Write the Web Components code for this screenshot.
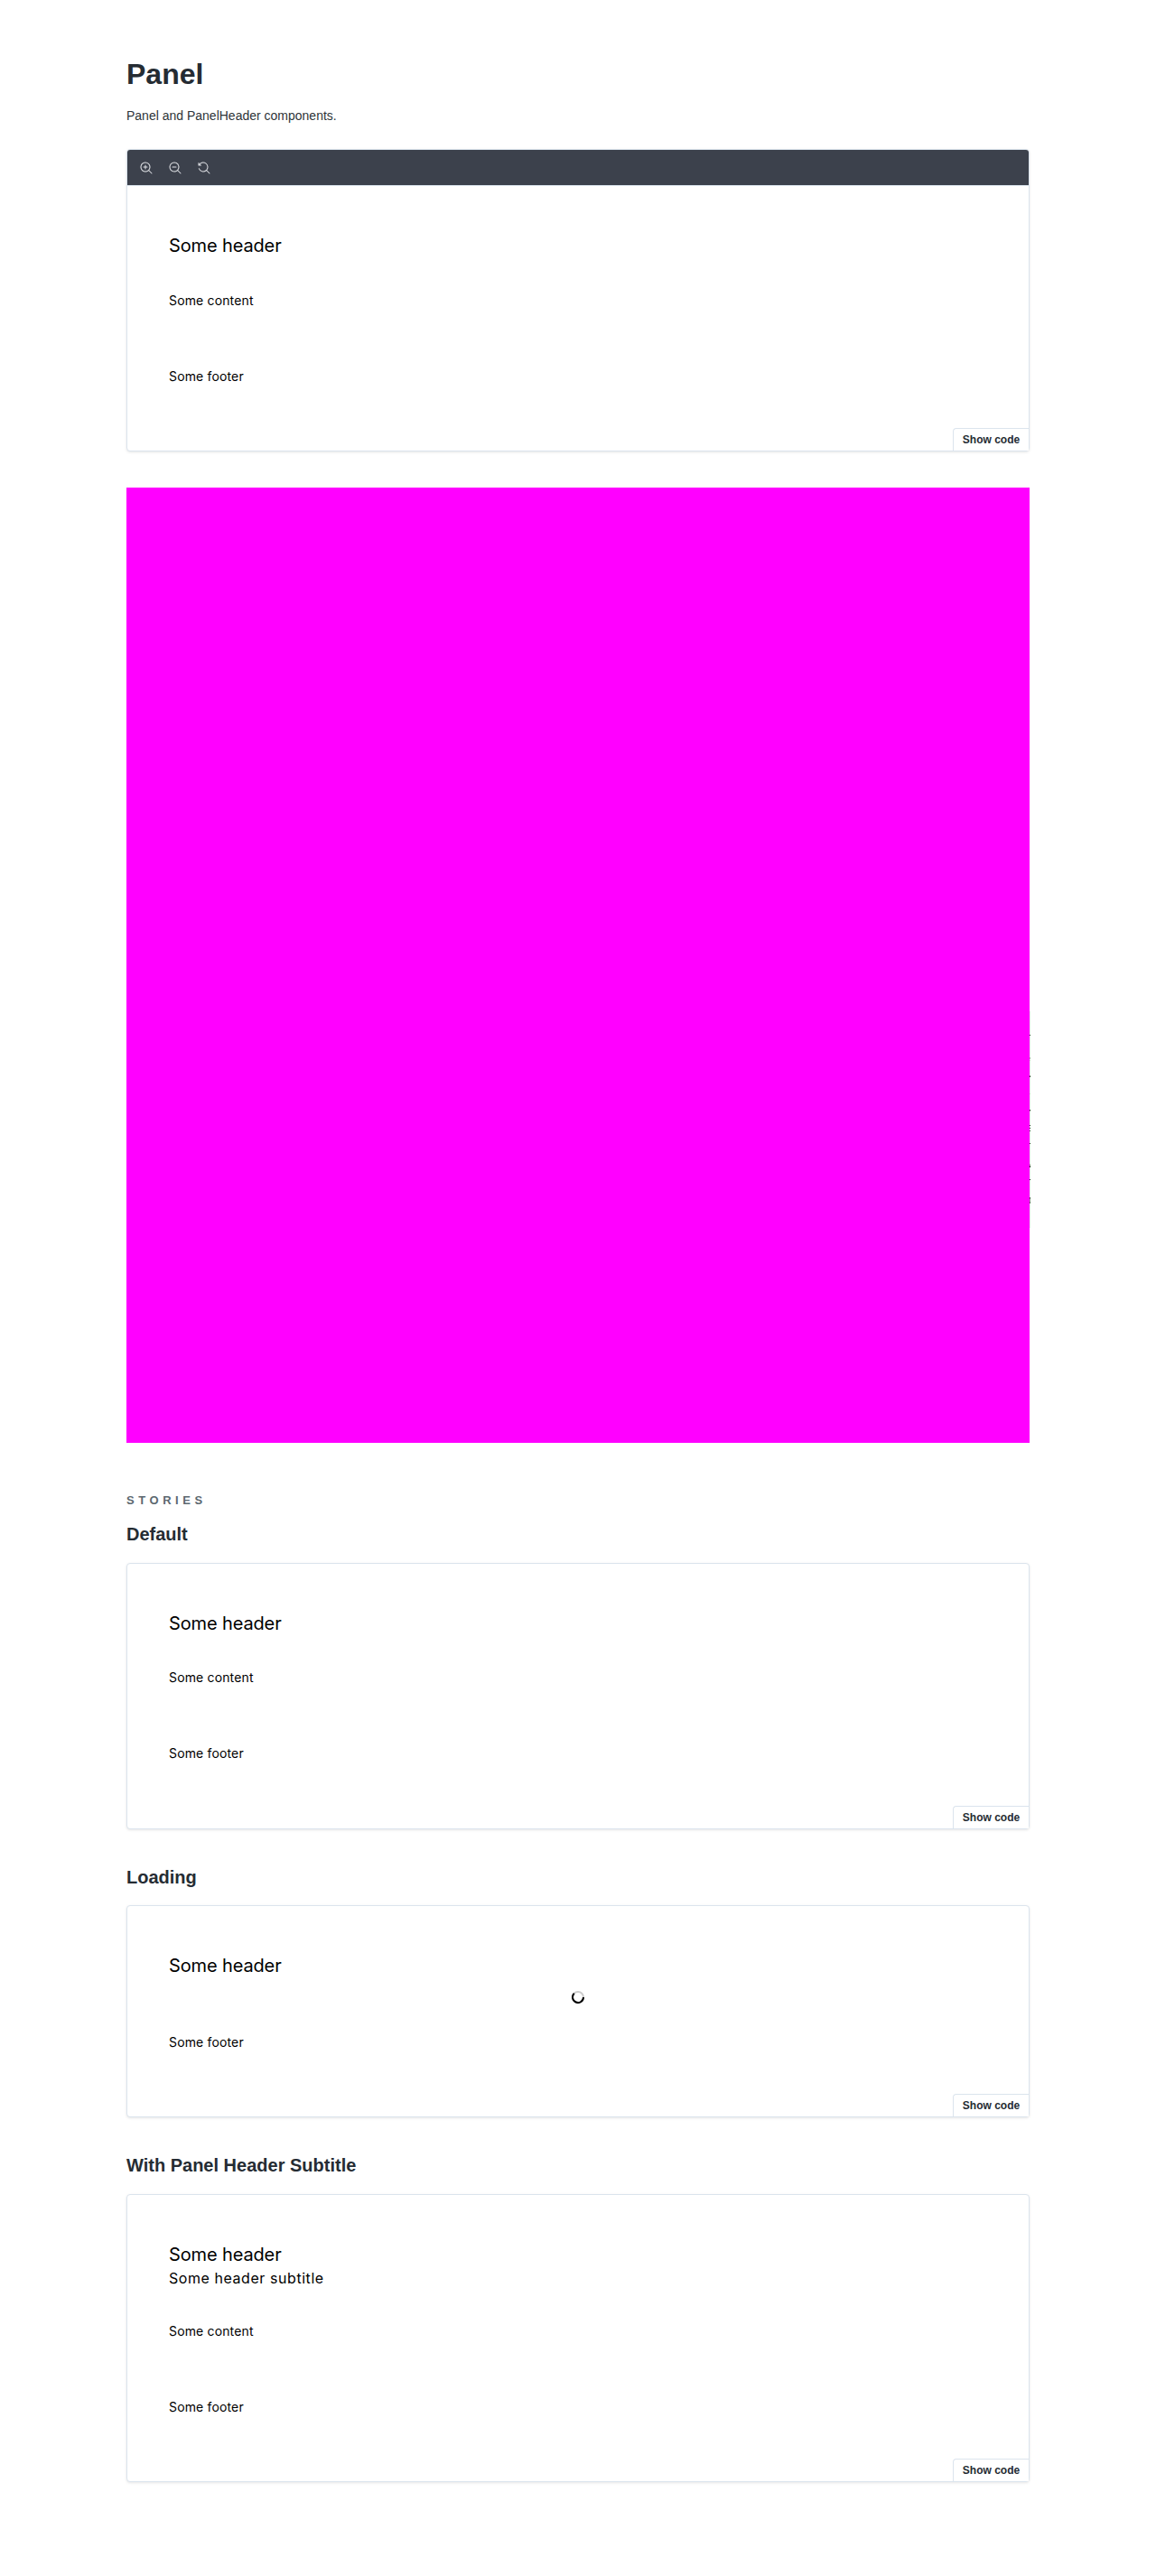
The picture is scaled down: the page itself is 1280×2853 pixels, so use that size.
<!DOCTYPE html>
<html lang="en">
<head>
<meta charset="utf-8">
<title>Panel</title>
<style>
body{margin:0;background:#fff;font-family:"Liberation Sans",Arial,sans-serif;color:#2e3438}
</style>
</head>
<body>
<docs-page>
  <docs-title>Panel</docs-title>
  <docs-text>Panel and PanelHeader components.</docs-text>
  <story-card toolbar style="--body-gap:31px;--end-gap:47px">
    <demo-panel><span slot="header">Some header</span><span slot="content">Some content</span><span slot="footer">Some footer</span></demo-panel>
  </story-card>
  <masked-block></masked-block>
  <docs-eyebrow>Stories</docs-eyebrow>
  <docs-heading style="--above:17px">Default</docs-heading>
  <story-card style="--body-gap:30px;--end-gap:48px">
    <demo-panel><span slot="header">Some header</span><span slot="content">Some content</span><span slot="footer">Some footer</span></demo-panel>
  </story-card>
  <docs-heading style="--below:19px">Loading</docs-heading>
  <story-card>
    <demo-panel loading><span slot="header">Some header</span><span slot="footer">Some footer</span></demo-panel>
  </story-card>
  <docs-heading>With Panel Header Subtitle</docs-heading>
  <story-card style="--body-gap:37px">
    <demo-panel subtitle><span slot="header">Some header</span><span slot="subtitle">Some header subtitle</span><span slot="content">Some content</span><span slot="footer">Some footer</span></demo-panel>
  </story-card>
</docs-page>
<script>
const define = (name, markup) => customElements.define(name, class extends HTMLElement {
  constructor() {
    super();
    this.attachShadow({ mode: "open" }).innerHTML = typeof markup === "function" ? markup(this) : markup;
  }
});

define("docs-page", `<style>:host{display:flex;flex-direction:column;box-sizing:border-box;width:1000px;min-height:2853px;margin:0 auto;padding:64px 0}</style><slot></slot>`);
define("docs-title", `<style>:host{display:block}h1{margin:0;font-size:32px;line-height:36px;font-weight:700;color:#252c33}</style><h1><slot></slot></h1>`);
define("docs-text", `<style>:host{display:block;margin:16px 0 25px}p{margin:0;font-size:14px;line-height:24px}</style><p><slot></slot></p>`);
define("docs-eyebrow", `<style>:host{display:block;margin-top:56px}h2{margin:0;font-size:13px;line-height:16px;font-weight:700;letter-spacing:.35em;text-transform:uppercase;color:#5c6870}</style><h2><slot></slot></h2>`);
define("docs-heading", `<style>:host{display:block;margin:var(--above,41px) 0 var(--below,20px)}h3{margin:0;font-size:20px;line-height:24px;font-weight:700;color:#252c33}</style><h3><slot></slot></h3>`);

// Opaque cover with the one-pixel edge of the table underneath peeking out on the right.
define("masked-block", () => {
  const marks = [[1120,240,"#e4e8ea"],[1146,1,"#333"],[1171,2,"#aaa"],[1174,1,"#ccc"],[1191,1,"#777"],[1192,1,"#222"],[1211,1,"#ccc"],[1229,1,"#222"],[1230,1,"#999"],[1246,1,"#333"],[1249,1,"#333"],[1252,1,"#444"],[1266,1,"#333"],[1289,2,"#aaa"],[1291,2,"#333"],[1306,1,"#222"],[1326,2,"#555"],[1328,3,"#999"],[1331,1,"#555"],[1332,1,"#777"]];
  return `<style>:host{display:block;position:relative;height:1058px;margin-top:40px;background:#f0f}i{position:absolute;left:100%;width:1px}</style>` +
    marks.map(([y, h, c]) => `<i style="top:${y - 540}px;height:${h}px;background:${c}"></i>`).join("");
});

define("tool-icon", el => {
  const shapes = {
    in: '<path d="M6 3.5a.5.5 0 01.5.5v1.5H8a.5.5 0 010 1H6.5V8a.5.5 0 01-1 0V6.5H4a.5.5 0 010-1h1.5V4a.5.5 0 01.5-.5z"/><path fill-rule="evenodd" d="M9.544 10.206a5.5 5.5 0 11.662-.662.5.5 0 01.148.102l3 3a.5.5 0 01-.708.708l-3-3a.5.5 0 01-.102-.148zM10.5 6a4.5 4.5 0 11-9 0 4.5 4.5 0 019 0z"/>',
    out: '<path d="M4 5.5a.5.5 0 000 1h4a.5.5 0 000-1H4z"/><path fill-rule="evenodd" d="M6 11.5c1.35 0 2.587-.486 3.544-1.294a.5.5 0 00.102.148l3 3a.5.5 0 00.708-.708l-3-3a.5.5 0 00-.148-.102A5.5 5.5 0 106 11.5zm0-1a4.5 4.5 0 100-9 4.5 4.5 0 000 9z"/>',
    reset: '<path d="M1.5 2.837V1.5a.5.5 0 00-1 0V4a.5.5 0 00.5.5h2.5a.5.5 0 000-1H2.258a4.5 4.5 0 11-.496 4.016.5.5 0 10-.942.337 5.502 5.502 0 008.724 2.353.5.5 0 00.102.148l3 3a.5.5 0 00.708-.708l-3-3a.5.5 0 00-.148-.102A5.5 5.5 0 101.5 2.837z"/>'
  };
  return `<style>:host{display:block;width:14px;height:14px}svg{display:block;fill:#e2e4e8}</style><svg width="14" height="14" viewBox="0 0 14 14">${shapes[el.getAttribute("name")]}</svg>`;
});

define("story-toolbar", `<style>:host{display:flex;box-sizing:border-box;height:40px;align-items:center;gap:18px;padding-left:14px;background:#3c414c;border-bottom:1px solid #dbe4ed;border-radius:3px 3px 0 0}</style><tool-icon name="in"></tool-icon><tool-icon name="out"></tool-icon><tool-icon name="reset"></tool-icon>`);

define("show-code", `<style>:host{display:block;align-self:flex-end}button{display:block;box-sizing:border-box;width:84px;height:25px;margin:0;padding:0 0 1px;border:1px solid #dbe4ed;border-width:1px 0 0 1px;border-radius:4px 0 0 0;background:#fff;color:#252c33;font:700 12px/16px "Liberation Sans",Arial,sans-serif}</style><button>Show code</button>`);

define("story-card", el => `<style>:host{display:flex;flex-direction:column;border:1px solid #dbe4ed;border-radius:4px;box-shadow:rgba(0,0,0,.1) 0 1px 3px 0;background:#fff}</style>${el.hasAttribute("toolbar") ? "<story-toolbar></story-toolbar>" : ""}<slot></slot><show-code></show-code>`);

define("demo-panel", el => {
  const loading = el.hasAttribute("loading"), sub = el.hasAttribute("subtitle");
  return `<style>
:host{display:flex;flex-direction:column;padding:46px 46px 0;font-family:Inter,sans-serif;color:#000}
.header{font-size:20px;line-height:40px;height:40px;letter-spacing:-.13px}
.subtitle{font-size:16px;line-height:24px;height:24px;margin-top:-6px;letter-spacing:.56px}
.content{font-size:14px;line-height:20px;height:20px;margin-top:var(--body-gap,30px);letter-spacing:.15px}
.busy{display:flex;justify-content:center;margin-top:8px;height:14px}
.footer{font-size:14px;line-height:20px;height:20px;margin-top:${loading ? 33 : 64}px;margin-bottom:var(--end-gap,47px);letter-spacing:.15px}
</style>
<div class="header"><slot name="header"></slot></div>
${sub ? '<div class="subtitle"><slot name="subtitle"></slot></div>' : ""}
${loading ? '<div class="busy"><svg width="14" height="14" viewBox="0 0 14 14" fill="none" stroke-width="2"><circle cx="7" cy="7" r="6" stroke="#ccc"/><path d="M2.76 2.76A6 6 0 1 0 13 7" stroke="#000"/></svg></div>' : '<div class="content"><slot name="content"></slot></div>'}
<div class="footer"><slot name="footer"></slot></div>`;
});
</script>
</body>
</html>
